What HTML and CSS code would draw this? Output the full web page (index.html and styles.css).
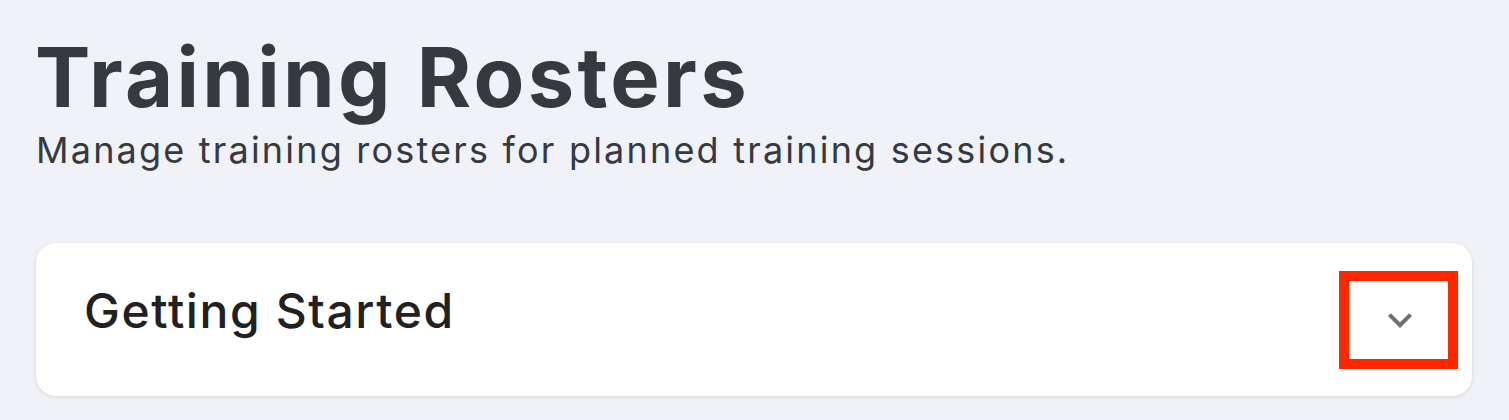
FILE: index.html
```html
<!DOCTYPE html>
<html lang="en">
<head>
<meta charset="utf-8">
<title>Training Rosters</title>
<link rel="stylesheet" href="styles.css">
</head>
<body>
<main class="page">
  <header class="page-header">
    <h1 class="page-title">Training Rosters</h1>
    <p class="page-subtitle">Manage training rosters for planned training sessions.</p>
  </header>
  <section class="card">
    <h2 class="card-title">Getting Started</h2>
    <button class="toggle" type="button" aria-label="Expand">
      <svg class="chevron" width="48" height="48" viewBox="0 0 24 24" fill="currentColor">
        <path d="M16.59 8.59L12 13.17 7.41 8.59 6 10l6 6 6-6z"/>
      </svg>
    </button>
  </section>
</main>
</body>
</html>
```
FILE: styles.css
```css
* { box-sizing: border-box; }
html, body { margin: 0; padding: 0; }
body {
  background: #f1f2f7;
  font-family: "Inter", "Open Sans", "Liberation Sans", sans-serif;
  width: 1509px;
  height: 420px;
  overflow: hidden;
}
.page {
  padding: 27px 37px 0 36px;
}
.page-header {
  display: flex;
  flex-direction: column;
}
.page-title {
  margin: 0 0 0 -1px;
  font-size: 83px;
  line-height: 100px;
  font-weight: 700;
  color: #343a40;
  letter-spacing: 3.3px;
}
.page-subtitle {
  margin: 3px 0 0 0;
  font-size: 36px;
  line-height: 40px;
  font-weight: 400;
  color: #343a40;
  letter-spacing: 2.2px;
}
.card {
  margin-top: 73px;
  height: 153px;
  background: #ffffff;
  border-radius: 20px;
  box-shadow: 0 1px 4px rgba(0, 0, 0, 0.12);
  display: flex;
  align-items: center;
  justify-content: space-between;
  padding: 0 14px 0 48px;
}
.card-title {
  margin: 0 0 18px 0;
  font-size: 48px;
  line-height: 58px;
  font-weight: 500;
  color: #212121;
  letter-spacing: 1.6px;
}
.toggle {
  width: 119px;
  height: 98px;
  border: 10px solid #ff2600;
  background: #ffffff;
  display: flex;
  align-items: center;
  justify-content: center;
  color: #707070;
  padding: 0 0 0 3px;
  margin: 0;
}
.chevron { display: block; }
```
